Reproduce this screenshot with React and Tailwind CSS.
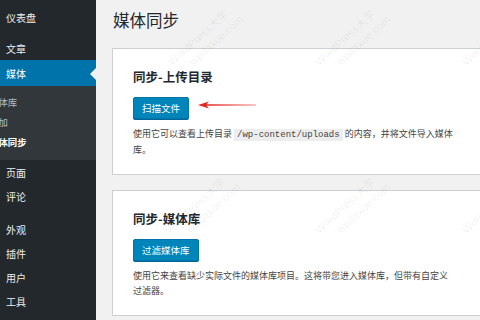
import React from 'react';

const cjk = { fontFamily: '"Noto Sans CJK SC", "Noto Sans", sans-serif' };

function MenuItem({ label }) {
  return (
    <div className="h-[24px] flex items-center pl-[6px] text-[10px] text-[#eeeeee]">{label}</div>
  );
}

function SubItem({ label, current }) {
  return (
    <div
      className={`h-[20px] flex items-center -ml-[11px] text-[9.4px] ${
        current ? 'text-white font-bold' : 'text-[#b4b9be]'
      }`}
    >
      {label}
    </div>
  );
}

function Sidebar() {
  return (
    <aside className="w-[96px] shrink-0 bg-[#23282d] h-[320px] pt-[5px] flex flex-col">
      <MenuItem label="仪表盘" />
      <div className="h-[7px]" />
      <MenuItem label="文章" />
      <div className="relative h-[26px] bg-[#0073aa] flex items-center pl-[6px] text-[10px] text-white">
        媒体
        <span className="absolute right-0 top-[8px] border-y-[6px] border-y-transparent border-r-[6px] border-r-[#f1f1f1]" />
      </div>
      <div className="bg-[#32373c] pt-[6px] pb-[8px]">
        <SubItem label="媒体库" />
        <SubItem label="添加" />
        <SubItem label="媒体同步" current />
      </div>
      <MenuItem label="页面" />
      <MenuItem label="评论" />
      <div className="h-[9px]" />
      <MenuItem label="外观" />
      <MenuItem label="插件" />
      <MenuItem label="用户" />
      <MenuItem label="工具" />
    </aside>
  );
}

function Card({ title, button, first, rest, arrow }) {
  return (
    <div className="w-[369px] bg-white border border-[#ccd0d4] px-[20px] pt-[20px] pb-[17px]">
      <h2 className="text-[12.5px] leading-[16px] font-bold text-[#23282d]">{title}</h2>
      <div className="relative mt-[8px] h-[22px]">
        <button className="h-[22px] px-[8px] bg-[#0085ba] border border-[#0073aa] rounded-[2px] text-white text-[9.5px] leading-[20px] shadow-[0_1px_0_#006799]">
          {button}
        </button>
        {arrow && (
          <svg className="absolute left-[65px] top-[8px]" width="58" height="8" viewBox="0 0 58 8">
            <polygon points="0,4 11,0.6 8.5,3.2 58,3.7 58,4.3 8.5,4.8 11,7.4" fill="#e3261f" />
          </svg>
        )}
      </div>
      <div className="mt-[12px] text-[9px] leading-[14.5px] text-[#444]">
        <p className="whitespace-nowrap">{first}</p>
        <p>{rest}</p>
      </div>
    </div>
  );
}

function Watermark({ className }) {
  return (
    <div
      className={`absolute pointer-events-none origin-top-left -rotate-[42deg] text-[11px] leading-[14px] text-black/[0.07] whitespace-nowrap ${className}`}
      style={{ fontFamily: '"Liberation Sans", "Noto Sans CJK SC", sans-serif' }}
    >
      <div>WordPress大学</div>
      <div className="pl-[16px]">wpdaxue.com</div>
    </div>
  );
}

export default function App() {
  return (
    <div className="relative w-[480px] h-[320px] overflow-hidden flex bg-[#f1f1f1]" style={cjk}>
      <Sidebar />
      <main className="flex-1 pl-[16px] pt-[9px]">
        <h1 className="text-[16.5px] leading-[22px] text-[#23282d] font-normal pl-[1px] mb-[17px]">媒体同步</h1>
        <div className="flex flex-col gap-[15px]">
          <Card
            title="同步-上传目录"
            button="扫描文件"
            arrow
            first={
              <>
                使用它可以查看上传目录{' '}
                <code
                  className="bg-black/[0.07] px-[3px] py-[1px] text-[9px]"
                  style={{ fontFamily: '"Liberation Mono", monospace' }}
                >
                  /wp-content/uploads
                </code>{' '}
                的内容，并将文件导入媒体
              </>
            }
            rest="库。"
          />
          <Card
            title="同步-媒体库"
            button="过滤媒体库"
            first="使用它来查看缺少实际文件的媒体库项目。这将带您进入媒体库，但带有自定义"
            rest="过滤器。"
          />
        </div>
      </main>
      <Watermark className="left-[165px] top-[58px]" />
      <Watermark className="left-[312px] top-[58px]" />
      <Watermark className="left-[459px] top-[58px]" />
      <Watermark className="left-[162px] top-[226px]" />
      <Watermark className="left-[312px] top-[226px]" />
      <Watermark className="left-[459px] top-[226px]" />
    </div>
  );
}
